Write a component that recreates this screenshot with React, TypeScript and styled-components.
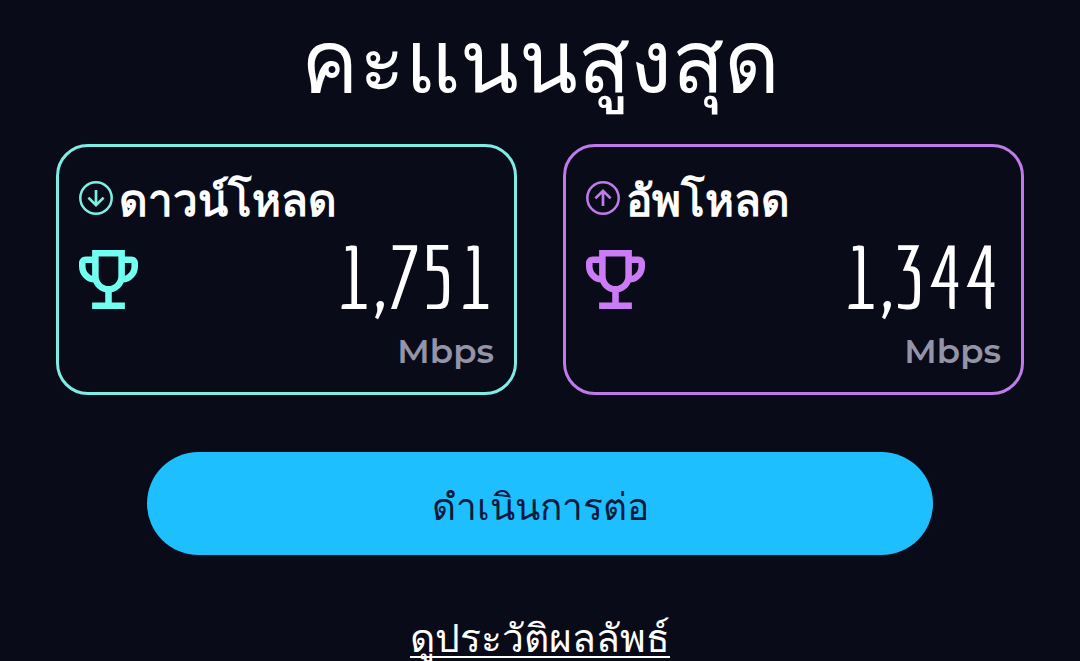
import React from "react";
import styled, { createGlobalStyle } from "styled-components";

const GlobalStyle = createGlobalStyle`
  *, *::before, *::after { box-sizing: border-box; }
  body {
    margin: 0;
    background: #0a0b19;
    color: #fff;
    font-family: "Noto Sans", "Liberation Sans", sans-serif;
  }
`;

const Page = styled.main`
  display: flex;
  flex-direction: column;
  align-items: center;
  padding-bottom: 24px;
`;

const Title = styled.h1`
  margin: 0 0 26px;
  font-size: 86px;
  line-height: 118px;
  font-weight: 400;
  white-space: nowrap;
`;

const Cards = styled.div`
  align-self: stretch;
  display: grid;
  grid-template-columns: 1fr 1fr;
  gap: 46px;
  padding: 0 56px;
`;

const Card = styled.section<{ $line: string }>`
  display: flex;
  flex-direction: column;
  gap: 19px;
  padding: 20px 20px 17px;
  border: 3px solid ${(p) => p.$line};
  border-radius: 32px;
`;

const CardHeader = styled.header`
  display: flex;
  align-items: center;
  gap: 6px;

  svg { flex: none; margin-bottom: 2px; }
`;

const CardTitle = styled.h2`
  margin: 0;
  font-size: 44px;
  line-height: 64px;
  font-weight: 700;
  white-space: nowrap;
`;

const Score = styled.div`
  display: flex;
  align-items: flex-start;
  justify-content: space-between;

  svg { flex: none; }
`;

const Reading = styled.p`
  display: flex;
  flex-direction: column;
  align-items: flex-end;
  gap: 25px;
  margin: 0;
`;

const Value = styled.span`
  font-family: "Economica", "Roboto Condensed", "Liberation Sans", sans-serif;
  font-size: 88px;
  line-height: 52px;
`;

const Unit = styled.span`
  color: #9394a8;
  font-family: "Montserrat", "Inter", sans-serif;
  font-size: 34px;
  line-height: 48px;
  font-weight: 600;
`;

const ContinueButton = styled.button`
  width: calc(100% - 294px);
  height: 103px;
  margin-top: 57px;
  padding: 4px 0 0;
  border: 0;
  border-radius: 52px;
  background: #1ebfff;
  color: #0d1a40;
  font-family: inherit;
  font-size: 37px;
  line-height: 56px;
  cursor: pointer;
`;

const HistoryLink = styled.a`
  margin-top: 60px;
  color: #fff;
  font-size: 39px;
  line-height: 44px;
  text-decoration: underline;
  text-decoration-thickness: 2px;
  text-underline-offset: 4px;
  text-decoration-skip-ink: none;
  white-space: nowrap;
`;

function DirectionIcon({ color, up }: { color: string; up?: boolean }) {
  return (
    <svg width="34" height="34" viewBox="0 0 34 34" fill="none" stroke={color} aria-hidden="true">
      <circle cx="17" cy="17" r="15.7" strokeWidth="2.5" />
      <path
        d={up ? "M17 25V9.8M9.4 17.4L17 9.8l7.6 7.6" : "M17 9v15.2M9.4 16.6l7.6 7.6 7.6-7.6"}
        strokeWidth="2.7"
      />
    </svg>
  );
}

function Trophy({ color }: { color: string }) {
  return (
    <svg width="59" height="59" viewBox="3 3 18 18" fill={color} aria-hidden="true">
      <path d="M19 5h-2V3H7v2H5c-1.1 0-2 .9-2 2v1c0 2.55 1.92 4.63 4.39 4.94.63 1.5 1.98 2.63 3.61 2.96V19H7v2h10v-2h-4v-3.1c1.63-.33 2.98-1.46 3.61-2.96C19.08 12.63 21 10.55 21 8V7c0-1.1-.9-2-2-2zM5 8V7h2v3.82C5.84 10.4 5 9.3 5 8zm7 6c-1.65 0-3-1.35-3-3V5h6v6c0 1.65-1.35 3-3 3zm7-6c0 1.3-.84 2.4-2 2.82V7h2v1z" />
    </svg>
  );
}

interface ScoreCardProps {
  label: string;
  value: string;
  color: string;
  line: string;
  up?: boolean;
}

function ScoreCard({ label, value, color, line, up }: ScoreCardProps) {
  return (
    <Card $line={line}>
      <CardHeader>
        <DirectionIcon color={line} up={up} />
        <CardTitle>{label}</CardTitle>
      </CardHeader>
      <Score>
        <Trophy color={color} />
        <Reading>
          <Value>{value}</Value>
          <Unit>Mbps</Unit>
        </Reading>
      </Score>
    </Card>
  );
}

export default function App() {
  return (
    <>
      <GlobalStyle />
      <Page>
        <Title>คะแนนสูงสุด</Title>
        <Cards>
          <ScoreCard label="ดาวน์โหลด" value="1,751" color="#70fff0" line="#7eeee4" />
          <ScoreCard label="อัพโหลด" value="1,344" color="#cc7bf6" line="#bf7bea" up />
        </Cards>
        <ContinueButton type="button">ดำเนินการต่อ</ContinueButton>
        <HistoryLink href="#history">ดูประวัติผลลัพธ์</HistoryLink>
      </Page>
    </>
  );
}
